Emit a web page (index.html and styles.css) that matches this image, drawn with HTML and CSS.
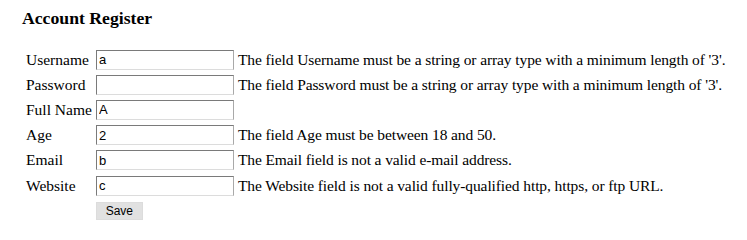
FILE: index.html
```html
<!DOCTYPE html>
<html>
<head>
<meta charset="utf-8">
<title>Account Register</title>
<link rel="stylesheet" href="styles.css">
</head>
<body>
<div class="page">
  <h3 class="title">Account Register</h3>
  <form class="form">
    <table class="grid">
      <tr>
        <td class="label">Username</td>
        <td><input class="field" type="text" value="a"></td>
        <td class="msg">The field Username must be a string or array type with a minimum length of '3'.</td>
      </tr>
      <tr>
        <td class="label">Password</td>
        <td><input class="field" type="password" value=""></td>
        <td class="msg">The field Password must be a string or array type with a minimum length of '3'.</td>
      </tr>
      <tr>
        <td class="label">Full Name</td>
        <td><input class="field" type="text" value="A"></td>
        <td class="msg"></td>
      </tr>
      <tr>
        <td class="label">Age</td>
        <td><input class="field" type="text" value="2"></td>
        <td class="msg">The field Age must be between 18 and 50.</td>
      </tr>
      <tr>
        <td class="label">Email</td>
        <td><input class="field" type="text" value="b"></td>
        <td class="msg">The Email field is not a valid e-mail address.</td>
      </tr>
      <tr>
        <td class="label">Website</td>
        <td><input class="field" type="text" value="c"></td>
        <td class="msg">The Website field is not a valid fully-qualified http, https, or ftp URL.</td>
      </tr>
      <tr>
        <td></td>
        <td><button class="save" type="button">Save</button></td>
        <td></td>
      </tr>
    </table>
  </form>
</div>
</body>
</html>
```

FILE: styles.css
```css
html, body {
  margin: 0;
  padding: 0;
  background: #ffffff;
}

body {
  font-family: "Liberation Serif", "Times New Roman", serif;
  font-size: 15.5px;
  color: #000000;
}

.page {
  padding: 10px 0 0 23px;
}

.title {
  font-size: 17.7px;
  font-weight: bold;
  margin: 0 0 0 -1px;
  line-height: 16px;
}

.form {
  margin: 0;
  padding-top: 20px;
}

.grid {
  border-collapse: separate;
  border-spacing: 2px;
  margin: 0;
}

.grid td {
  padding: 1px;
  height: 21.2px;
  vertical-align: middle;
  white-space: nowrap;
}

.label {
  padding-right: 2px;
}

.field {
  box-sizing: border-box;
  width: 138px;
  height: 20px;
  margin: 0;
  padding: 0 2px;
  border: 1px solid;
  border-color: #7a7a7a #a9a9a9 #dcdcdc #7a7a7a;
  font-family: "Liberation Sans", Arial, sans-serif;
  font-size: 13px;
  color: #000;
  background: #fff;
  display: block;
}

.msg {
  letter-spacing: -0.1px;
}

.save {
  box-sizing: border-box;
  width: 47px;
  height: 18px;
  margin: 0;
  padding: 0;
  border: 1px solid #dcdcdc;
  background: #e1e1e1;
  font-family: "Liberation Sans", Arial, sans-serif;
  font-size: 12px;
  color: #000;
  display: block;
}
```
